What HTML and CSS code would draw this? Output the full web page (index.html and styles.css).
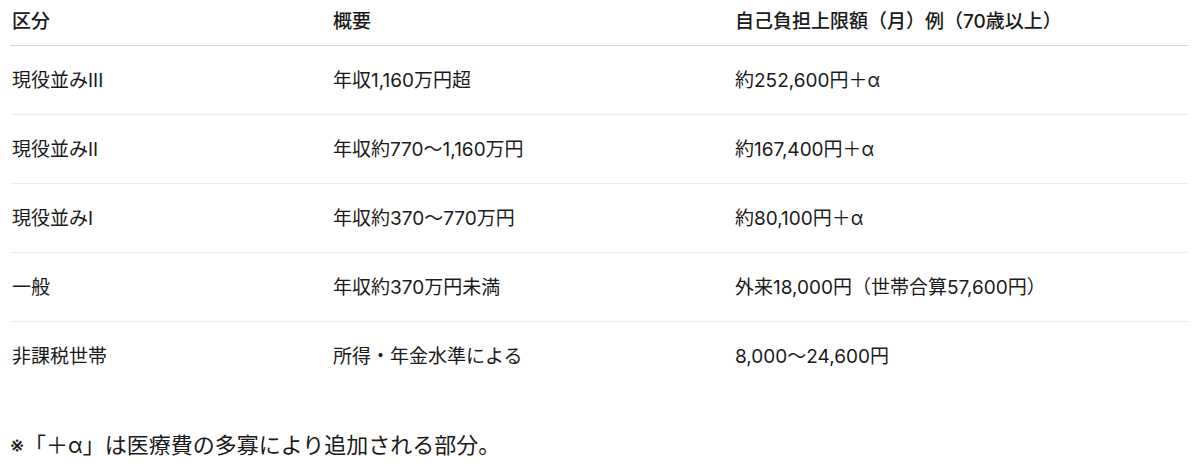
FILE: index.html
```html
<!DOCTYPE html>
<html lang="ja">
<head>
<meta charset="utf-8">
<title>自己負担上限額</title>
<link rel="stylesheet" href="styles.css">
</head>
<body>
<div class="page">
  <div class="table">
    <div class="row head">
      <div class="cell">区分</div>
      <div class="cell">概要</div>
      <div class="cell">自己負担上限額（月）例（70歳以上）</div>
    </div>
    <div class="row">
      <div class="cell">現役並みIII</div>
      <div class="cell">年収1,160万円超</div>
      <div class="cell">約252,600円＋α</div>
    </div>
    <div class="row">
      <div class="cell">現役並みII</div>
      <div class="cell">年収約770〜1,160万円</div>
      <div class="cell">約167,400円＋α</div>
    </div>
    <div class="row">
      <div class="cell">現役並みI</div>
      <div class="cell">年収約370〜770万円</div>
      <div class="cell">約80,100円＋α</div>
    </div>
    <div class="row">
      <div class="cell">一般</div>
      <div class="cell">年収約370万円未満</div>
      <div class="cell">外来18,000円（世帯合算57,600円）</div>
    </div>
    <div class="row last">
      <div class="cell">非課税世帯</div>
      <div class="cell">所得・年金水準による</div>
      <div class="cell">8,000〜24,600円</div>
    </div>
  </div>
  <p class="note">※「＋α」は医療費の多寡により追加される部分。</p>
</div>
</body>
</html>
```

FILE: styles.css
```css
html, body {
  margin: 0;
  padding: 0;
  background: #ffffff;
}

body {
  font-family: "Inter", "Noto Sans CJK JP", sans-serif;
  color: #1a1a1a;
}

.page {
  padding: 0 12px 0 10px;
}

.table {
  display: flex;
  flex-direction: column;
}

.row {
  display: grid;
  grid-template-columns: 321px 402px 1fr;
  border-bottom: 1px solid #ececec;
  font-size: 19px;
  line-height: 28px;
}

.row .cell {
  padding: 21px 2px 19px;
  white-space: nowrap;
}

.row.head {
  border-bottom: 1px solid #d8d8d8;
  font-weight: 500;
}

.row.head .cell {
  padding: 8px 2px 9px;
}

.row.last {
  border-bottom: none;
}

.note {
  margin: 39px 0 0;
  font-size: 22px;
  line-height: 32px;
}
```
